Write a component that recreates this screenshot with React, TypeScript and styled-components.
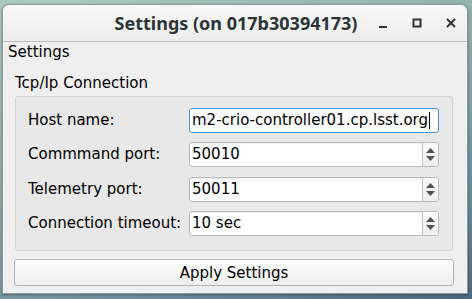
import React from "react";
import styled, { createGlobalStyle } from "styled-components";

const GlobalStyle = createGlobalStyle`
  html, body {
    margin: 0;
    padding: 0;
  }
  body {
    width: 472px;
    height: 299px;
    overflow: hidden;
    background: linear-gradient(160deg, #a9cbbf 0%, #8fb2ab 40%, #6d8ea0 75%, #4d6a82 100%);
    font-family: "DejaVu Sans", "Liberation Sans", sans-serif;
  }
`;

const Desktop = styled.div`
  width: 472px;
  height: 299px;
  box-sizing: border-box;
  padding: 4px 4px 5px 2px;
  display: flex;
`;

const Window = styled.div`
  flex: 1;
  display: flex;
  flex-direction: column;
  border-radius: 7px 7px 0 0;
  border: 1px solid #8f9a9c;
  overflow: hidden;
  box-shadow: 0 1px 3px rgba(0, 0, 0, 0.35);
`;

const TitleBar = styled.div`
  height: 36px;
  flex: none;
  display: grid;
  grid-template-columns: 1fr auto 1fr;
  align-items: center;
  background: linear-gradient(#f8f8f8, #ececec);
  border-bottom: 1px solid #bdbdbd;
`;

const Title = styled.div`
  grid-column: 2;
  font-family: "Noto Sans", "DejaVu Sans", sans-serif;
  font-weight: 700;
  font-size: 18px;
  color: #2e3436;
  padding-left: 2px;
`;

const Controls = styled.div`
  grid-column: 3;
  justify-self: end;
  display: flex;
  align-items: center;
  gap: 20px;
  padding-right: 9px;
`;

const ControlIcon = styled.svg`
  width: 14px;
  height: 14px;
  display: block;
`;

const Body = styled.div`
  flex: 1;
  background: #efefef;
  padding: 1px 5px 0 5px;
  color: #000;
  font-size: 15px;
`;

const DockTitle = styled.div`
  line-height: 18px;
  height: 20px;
`;

const Inner = styled.div`
  padding: 0 9px 0 7px;
  display: flex;
  flex-direction: column;
`;

const GroupTitle = styled.div`
  line-height: 18px;
  padding: 11px 0 4px 0;
`;

const Group = styled.div`
  border: 1px solid #d3d3d3;
  border-radius: 3px;
  background: #e8e8e8;
  padding: 11px 13px 14px 12px;
  display: grid;
  grid-template-columns: 161px 1fr;
  row-gap: 9.4px;
  align-items: center;
`;

const Label = styled.div`
  line-height: 25px;
`;

const Field = styled.div<{ $focused?: boolean }>`
  height: 25px;
  box-sizing: border-box;
  display: flex;
  align-items: stretch;
  background: #fff;
  border: 1px solid ${(p) => (p.$focused ? "#4a90d9" : "#b9b9b9")};
  border-radius: 3px;
  box-shadow: ${(p) => (p.$focused ? "none" : "inset 0 1px 1px rgba(0,0,0,0.06)")};
`;

const FieldText = styled.div`
  flex: 1;
  padding-left: 2px;
  line-height: 23px;
  white-space: nowrap;
  display: flex;
  align-items: center;
`;

const Caret = styled.span`
  display: inline-block;
  width: 1px;
  height: 17px;
  background: #000;
  margin-left: 1px;
`;

const SpinButtons = styled.div`
  width: 15px;
  border-left: 1px solid #c4c4c4;
  display: flex;
  flex-direction: column;
  align-items: center;
  justify-content: center;
  gap: 3px;
  background: linear-gradient(#fbfbfb, #eeeeee);
  border-radius: 0 2px 2px 0;
`;

const Arrow = styled.svg`
  width: 9px;
  height: 5px;
  display: block;
`;

const ApplyButton = styled.button`
  margin-top: 8px;
  height: 27px;
  border: 1px solid #b3b3b3;
  border-radius: 3px;
  background: linear-gradient(#fdfdfd, #eeeeee);
  font-family: "DejaVu Sans", "Liberation Sans", sans-serif;
  font-size: 15px;
  color: #000;
  padding: 0;
  margin-left: -1px;
  margin-right: -1px;
`;

const rows = [
  { label: "Host name:", value: "m2-crio-controller01.cp.lsst.org", spin: false },
  { label: "Commmand port:", value: "50010", spin: true },
  { label: "Telemetry port:", value: "50011", spin: true },
  { label: "Connection timeout:", value: "10 sec", spin: true },
];

const SpinArrows = () => (
  <SpinButtons>
    <Arrow viewBox="0 0 9 5">
      <polygon points="4.5,0 9,5 0,5" fill="#4f5355" />
    </Arrow>
    <Arrow viewBox="0 0 9 5">
      <polygon points="0,0 9,0 4.5,5" fill="#4f5355" />
    </Arrow>
  </SpinButtons>
);

const App = () => {
  return (
    <>
      <GlobalStyle />
      <Desktop>
        <Window>
          <TitleBar>
            <Title>Settings (on 017b30394173)</Title>
            <Controls>
              <ControlIcon viewBox="0 0 14 14">
                <rect x="3" y="10" width="8" height="2" fill="#2e3436" />
              </ControlIcon>
              <ControlIcon viewBox="0 0 14 14">
                <rect x="3.5" y="3.5" width="7" height="7" fill="none" stroke="#2e3436" strokeWidth="2" />
              </ControlIcon>
              <ControlIcon viewBox="0 0 14 14">
                <path d="M3 3 L11 11 M11 3 L3 11" stroke="#2e3436" strokeWidth="2" />
              </ControlIcon>
            </Controls>
          </TitleBar>
          <Body>
            <DockTitle>Settings</DockTitle>
            <Inner>
              <GroupTitle>Tcp/Ip Connection</GroupTitle>
              <Group>
                {rows.map((r, i) => (
                  <React.Fragment key={i}>
                    <Label>{r.label}</Label>
                    <Field $focused={!r.spin}>
                      <FieldText>
                        {r.value}
                        {!r.spin && <Caret />}
                      </FieldText>
                      {r.spin && <SpinArrows />}
                    </Field>
                  </React.Fragment>
                ))}
              </Group>
              <ApplyButton>Apply Settings</ApplyButton>
            </Inner>
          </Body>
        </Window>
      </Desktop>
    </>
  );
};

export default App;
